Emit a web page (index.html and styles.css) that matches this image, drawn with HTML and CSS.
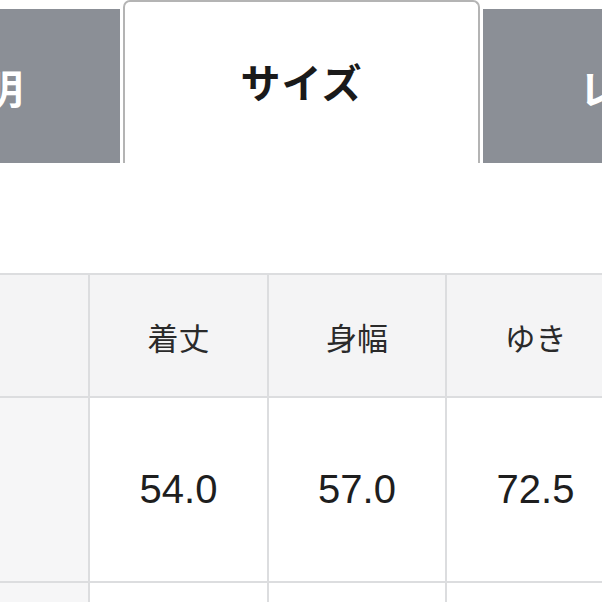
FILE: index.html
```html
<!DOCTYPE html>
<html lang="ja">
<head>
<meta charset="utf-8">
<link rel="stylesheet" href="styles.css">
</head>
<body>
<div class="page">
  <div class="tabs">
    <div class="tab tab-left"><span>商品説明</span></div>
    <div class="tab tab-active"><span>サイズ</span></div>
    <div class="tab tab-right"><span>レビュー</span></div>
  </div>
  <div class="spacer"></div>
  <div class="table">
    <div class="cell head"></div>
    <div class="cell head jp">着丈</div>
    <div class="cell head jp">身幅</div>
    <div class="cell head jp">ゆき</div>
    <div class="cell head"></div>
    <div class="cell side"></div>
    <div class="cell num">54.0</div>
    <div class="cell num">57.0</div>
    <div class="cell num">72.5</div>
    <div class="cell"></div>
    <div class="cell side"></div>
    <div class="cell"></div>
    <div class="cell"></div>
    <div class="cell"></div>
    <div class="cell"></div>
  </div>
</div>
</body>
</html>
```
FILE: styles.css
```css
html, body {
  margin: 0;
  padding: 0;
  background: #ffffff;
}
.page {
  width: 602px;
  height: 602px;
  overflow: hidden;
  font-family: "Noto Sans CJK JP", "Noto Sans", sans-serif;
}
.tabs {
  display: flex;
  align-items: flex-end;
  height: 163px;
  gap: 3px;
}
.tab {
  display: flex;
  align-items: center;
  box-sizing: border-box;
  font-size: 40px;
  font-weight: 700;
  white-space: nowrap;
  overflow: hidden;
  flex-shrink: 0;
}
.tab-left {
  width: 120px;
  height: 154px;
  background: #8b8f96;
  color: #ffffff;
  justify-content: flex-end;
  padding-right: 97px;
  padding-top: 2px;
}
.tab-active {
  width: 357px;
  height: 163px;
  background: #ffffff;
  border: 2px solid #b4b4b4;
  border-bottom: none;
  border-radius: 7px 7px 0 0;
  color: #1a1a1a;
  justify-content: center;
}
.tab-active span {
  letter-spacing: 1px;
  margin-top: -4px;
}
.tab-right {
  width: 200px;
  height: 154px;
  background: #8b8f96;
  color: #ffffff;
  justify-content: flex-start;
  padding-left: 96px;
  padding-top: 2px;
}
.spacer {
  height: 110px;
}
.table {
  display: grid;
  grid-template-columns: 88px 177px 176px 177px 100px;
  grid-template-rows: 121px 183px 40px;
  gap: 2px;
  padding-top: 2px;
  background: #dcdddf;
}
.cell {
  background: #ffffff;
  display: flex;
  align-items: center;
  justify-content: center;
  color: #222222;
}
.head {
  background: #f4f4f5;
}
.side {
  background: #f6f6f7;
}
.jp {
  font-size: 31px;
  font-weight: 400;
  color: #2a2a2a;
  padding-top: 1px;
}
.num {
  font-family: "Liberation Sans", Arial, sans-serif;
  font-size: 40px;
  color: #1e1e1e;
}
```
